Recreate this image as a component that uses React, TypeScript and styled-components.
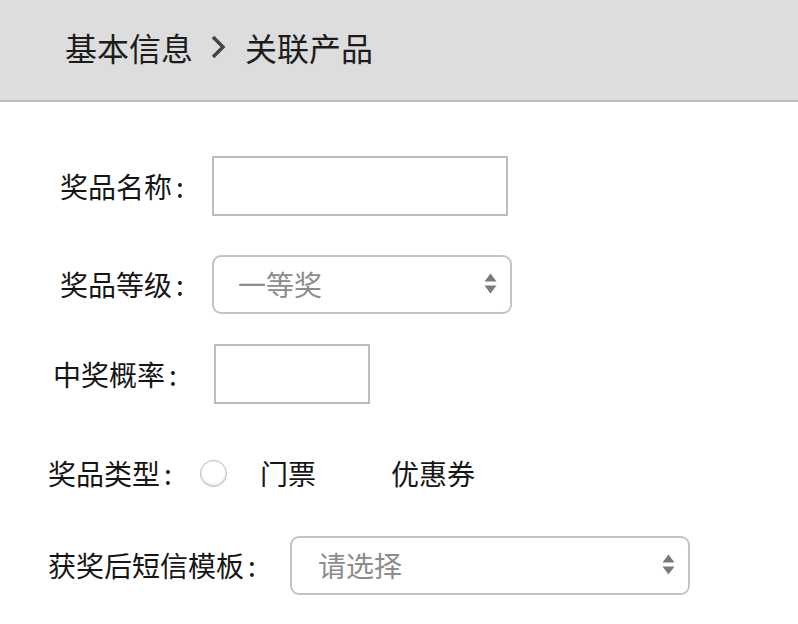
import React from "react";
import styled, { createGlobalStyle } from "styled-components";

const Global = createGlobalStyle`
  html, body { margin: 0; padding: 0; background: #fff; }
  body { font-family: "Noto Sans CJK SC", "Noto Sans", sans-serif; color: #161616; }
`;

const Header = styled.header`
  background: #dddddd;
  border-bottom: 2px solid #bbbbbb;
  display: flex;
  align-items: center;
  padding: 0 0 6px 65px;
  box-sizing: border-box;
  height: 102px;
  font-size: 32px;
  color: #1c1c1c;
`;

const Crumb = styled.span`
  line-height: 1;
`;

const Chevron = styled.svg`
  width: 17px;
  height: 26px;
  margin: 0 18px 0 17px;
`;

const Form = styled.div`
  display: flex;
  flex-direction: column;
`;

const Row = styled.div<{ $top: number; $indent: number }>`
  display: flex;
  align-items: center;
  height: 60px;
  margin-top: ${(p) => p.$top}px;
  padding-left: ${(p) => p.$indent}px;
`;

const Label = styled.label<{ $w: number }>`
  font-size: 28px;
  line-height: 1;
  width: ${(p) => p.$w}px;
  flex: none;
  white-space: nowrap;
`;

const Colon = styled.span`
  margin-left: 4px;
`;

const TextBox = styled.div<{ $w: number }>`
  width: ${(p) => p.$w}px;
  height: 60px;
  box-sizing: border-box;
  border: 2px solid #bdbdbd;
  background: #fff;
`;

const Select = styled.div<{ $w: number; $pad: number }>`
  width: ${(p) => p.$w}px;
  height: 59px;
  box-sizing: border-box;
  border: 2px solid #c4c4c4;
  border-radius: 9px;
  display: flex;
  align-items: center;
  justify-content: space-between;
  padding: 0 13px 0 ${(p) => p.$pad}px;
  font-size: 28px;
  line-height: 1;
  color: #8c8c8c;
`;

const Arrows = styled.svg`
  width: 13px;
  height: 22px;
`;

const Radio = styled.span`
  width: 27px;
  height: 27px;
  flex: none;
  box-sizing: border-box;
  border-radius: 50%;
  border: 1.5px solid #b8b8b8;
  background: radial-gradient(circle at 50% 35%, #ffffff 55%, #ececec 100%);
  box-shadow: inset 0 -1px 2px rgba(0, 0, 0, 0.12);
  margin-right: 33px;
`;

const Option = styled.span<{ $gap: number }>`
  font-size: 28px;
  line-height: 1;
  margin-right: ${(p) => p.$gap}px;
`;

const SelectArrows = () => (
  <Arrows viewBox="0 0 13 22">
    <polygon points="6.5,0.5 12.5,8.5 0.5,8.5" fill="#7a7a7a" />
    <polygon points="0.5,12.5 12.5,12.5 6.5,20.5" fill="#7a7a7a" />
  </Arrows>
);

export default function App() {
  return (
    <>
      <Global />
      <Header>
        <Crumb>基本信息</Crumb>
        <Chevron viewBox="0 0 17 26">
          <polyline
            points="3,3 13,13 3,23"
            fill="none"
            stroke="#444"
            strokeWidth="3.5"
            strokeLinejoin="miter"
          />
        </Chevron>
        <Crumb>关联产品</Crumb>
      </Header>
      <Form>
        <Row $top={54} $indent={60}>
          <Label $w={152}>奖品名称<Colon>:</Colon></Label>
          <TextBox $w={296} />
        </Row>
        <Row $top={38} $indent={60}>
          <Label $w={152}>奖品等级<Colon>:</Colon></Label>
          <Select $w={300} $pad={24}>
            一等奖
            <SelectArrows />
          </Select>
        </Row>
        <Row $top={30} $indent={53}>
          <Label $w={161}>中奖概率<Colon>:</Colon></Label>
          <TextBox $w={156} />
        </Row>
        <Row $top={39} $indent={48}>
          <Label $w={152}>奖品类型<Colon>:</Colon></Label>
          <Radio />
          <Option $gap={75}>门票</Option>
          <Option $gap={0}>优惠券</Option>
        </Row>
        <Row $top={32} $indent={48}>
          <Label $w={242}>获奖后短信模板<Colon>:</Colon></Label>
          <Select $w={400} $pad={26}>
            请选择
            <SelectArrows />
          </Select>
        </Row>
      </Form>
    </>
  );
}
